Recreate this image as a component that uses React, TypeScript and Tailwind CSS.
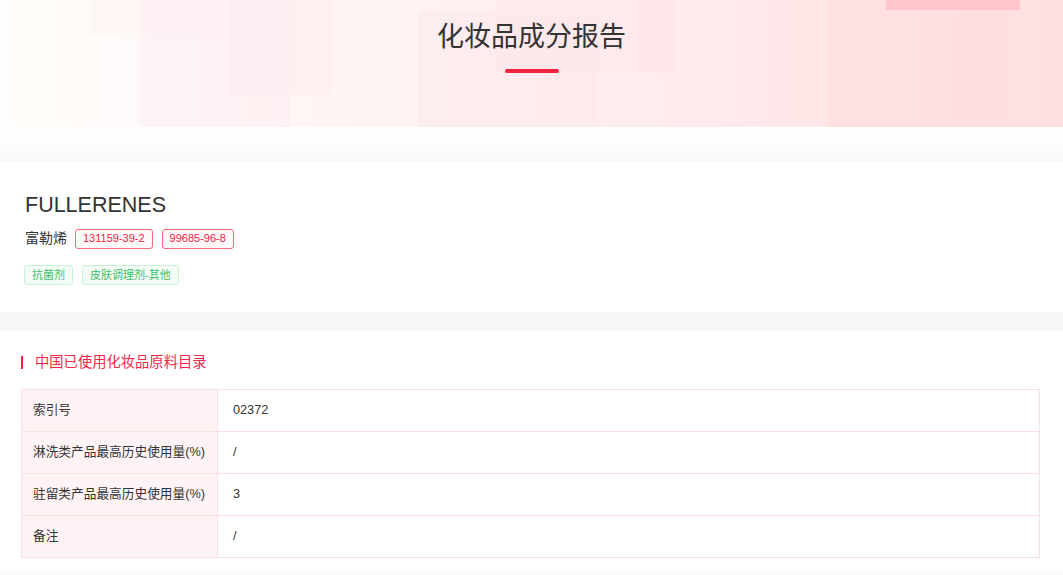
import React from 'react';

const rows: { label: string; value: string }[] = [
  { label: '索引号', value: '02372' },
  { label: '淋洗类产品最高历史使用量(%)', value: '/' },
  { label: '驻留类产品最高历史使用量(%)', value: '3' },
  { label: '备注', value: '/' },
];

const Header: React.FC = () => (
  <div className="relative h-[127px] overflow-hidden bg-[linear-gradient(to_right,#fffdfb_0%,#fffaf9_12%,#fff1f2_45%,#ffe9ea_70%,#ffdfe0_100%)]">
    {/* decorative squares */}
    <div className="absolute left-[90px] top-0 w-[134px] h-[35px] bg-[#fff3f4]/60" />
    <div className="absolute left-[141px] top-0 w-[149px] h-[127px] bg-[#fdeef1]/60" />
    <div className="absolute left-[230px] top-0 w-[102px] h-[95px] bg-[#fde6ea]/35" />
    <div className="absolute left-[418px] top-[11px] w-[179px] h-[116px] bg-[#fde6ea]/45" />
    <div className="absolute left-[495px] top-0 w-[180px] h-[73px] bg-[#fde3e6]/40" />
    <div className="absolute left-[827px] top-0 w-[180px] h-[127px] bg-[#ffdadc]/40" />
    <div className="absolute left-[886px] top-0 w-[134px] h-[10px] bg-[#ffc5ca]" />

    <div className="relative flex flex-col items-center pt-[19px]">
      <h1 className="text-[27px] leading-[36px] text-[#333] font-normal">化妆品成分报告</h1>
      <div className="mt-[14px] w-[54px] h-[4px] rounded-full bg-[#f1233f]" />
    </div>
  </div>
);

const RedTag: React.FC<{ children: React.ReactNode }> = ({ children }) => (
  <span className="h-[20px] px-[7px] flex items-center rounded-[3px] border border-[#f76a80] bg-[#fff8f9] text-[11px] text-[#f0243f]">
    {children}
  </span>
);

const GreenTag: React.FC<{ children: React.ReactNode }> = ({ children }) => (
  <span className="h-[20px] px-[7px] flex items-center rounded-[3px] border border-[#c8f0d2] bg-[#f4fcf6] text-[11px] text-[#3cc068]">
    {children}
  </span>
);

export default function App() {
  return (
    <div
      className="w-[1063px] min-h-[575px] bg-[#fafafa] text-[#333]"
      style={{ fontFamily: '"Liberation Sans", "Noto Sans CJK SC", sans-serif' }}
    >
      <Header />
      <div className="h-[35px] bg-gradient-to-b from-white via-[#fdfdfd] to-[#f7f7f7]" />

      {/* basic info card */}
      <div className="bg-white pt-[29px] pb-[27px] px-[25px]">
        <div className="text-[21.5px] leading-[28px] text-[#333]">FULLERENES</div>
        <div className="mt-[9px] flex items-center gap-[9px]">
          <span className="text-[14px] mr-[-1px]">富勒烯</span>
          <RedTag>131159-39-2</RedTag>
          <RedTag>99685-96-8</RedTag>
        </div>
        <div className="mt-[16px] flex items-center gap-[9px] ml-[-1px]">
          <GreenTag>抗菌剂</GreenTag>
          <GreenTag>皮肤调理剂-其他</GreenTag>
        </div>
      </div>
      <div className="h-[19px] bg-[#f6f6f6]" />

      {/* catalog card */}
      <div className="bg-white pt-[25px] pb-[13px] pl-[21px] pr-[23px]">
        <div className="flex items-center h-[14px] mt-[-1px]">
          <div className="w-[2px] h-[13px] bg-[#f0243f]" />
          <span className="ml-[12px] text-[14.3px] leading-[14px] text-[#f0284a]">中国已使用化妆品原料目录</span>
        </div>
        <div className="mt-[20px] border border-[#fbe0e2]">
          {rows.map((r, i) => (
            <div key={r.label} className={`flex ${i > 0 ? 'h-[42px] border-t border-[#fbe0e2]' : 'h-[41px]'}`}>
              <div className="w-[196px] shrink-0 bg-[#fff3f5] border-r border-[#fbe0e2] flex items-center pl-[11px] text-[12.7px]">
                {r.label}
              </div>
              <div className="flex-1 flex items-center pl-[15px] text-[12.7px]">{r.value}</div>
            </div>
          ))}
        </div>
      </div>
    </div>
  );
}
